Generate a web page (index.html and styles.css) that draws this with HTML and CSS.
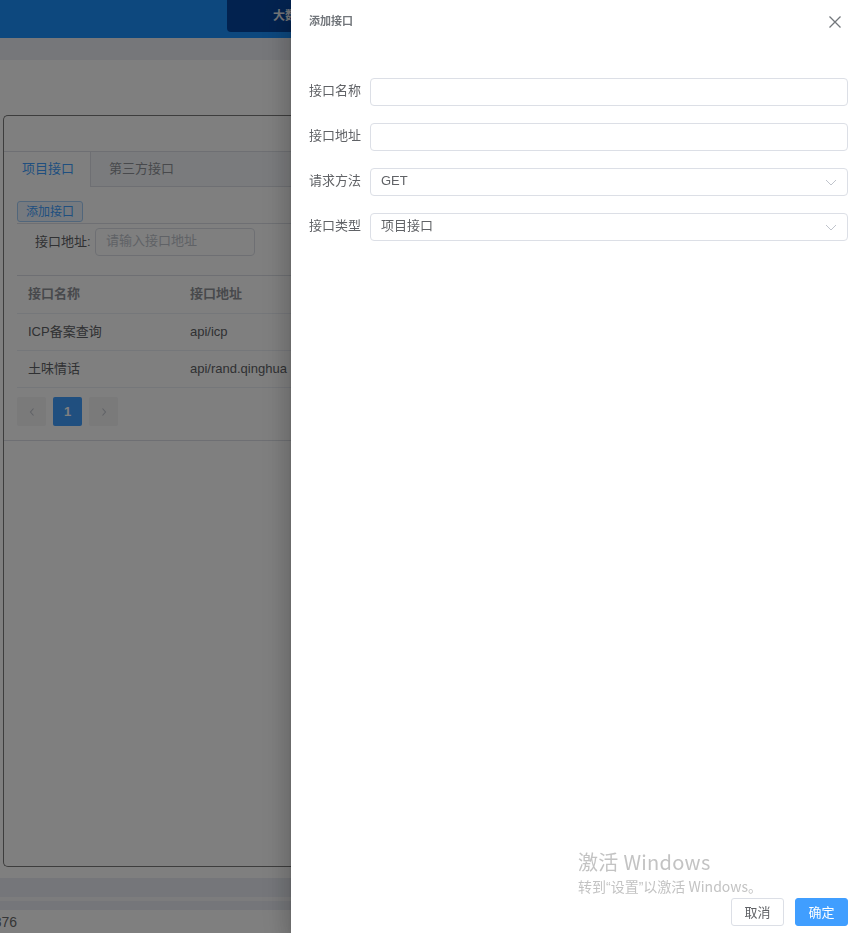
FILE: index.html
```html
<!DOCTYPE html>
<html lang="zh-CN">
<head>
<meta charset="utf-8">
<title>添加接口</title>
<link rel="stylesheet" href="styles.css">
</head>
<body>
<div class="app">
  <header class="topbar">
    <div class="nav-item"><span class="nav-text">大数据平台</span></div>
  </header>
  <div class="tagsbar"></div>
  <main class="content">
    <div class="card">
      <div class="card-head"></div>
      <div class="tabs">
        <div class="tabs-nav">
          <div class="tab active">项目接口</div>
          <div class="tab">第三方接口</div>
        </div>
        <div class="tabs-body">
          <button class="btn-add">添加接口</button>
          <div class="search">
            <span class="search-label">接口地址:</span>
            <div class="search-input">请输入接口地址</div>
          </div>
          <table class="table">
            <thead>
              <tr><th class="c1">接口名称</th><th>接口地址</th></tr>
            </thead>
            <tbody>
              <tr><td class="c1">ICP备案查询</td><td>api/icp</td></tr>
              <tr><td class="c1">土味情话</td><td>api/rand.qinghua</td></tr>
            </tbody>
          </table>
          <div class="pager">
            <span class="pg-btn"><svg width="8" height="10" viewBox="0 0 8 10"><path d="M5.5 1.5 2.5 5l3 3.5" fill="none" stroke="#c0c4cc" stroke-width="1.1"/></svg></span>
            <span class="pg-btn current">1</span>
            <span class="pg-btn"><svg width="8" height="10" viewBox="0 0 8 10"><path d="M2.5 1.5 5.5 5l-3 3.5" fill="none" stroke="#c0c4cc" stroke-width="1.1"/></svg></span>
          </div>
        </div>
      </div>
    </div>
  </main>
  <div class="band band-a"></div>
  <div class="band band-gap"></div>
  <div class="band band-b"></div>
  <footer class="foot">2876</footer>
</div>

<div class="overlay"></div>

<aside class="drawer">
  <div class="drawer-head">
    <span class="drawer-title">添加接口</span>
    <svg class="close" width="14" height="14" viewBox="0 0 14 14"><path d="M1.5 1.5l11 11M12.5 1.5l-11 11" stroke="#72767b" stroke-width="1.3" fill="none"/></svg>
  </div>
  <div class="drawer-body">
    <div class="form-item">
      <label class="form-label">接口名称</label>
      <div class="field"></div>
    </div>
    <div class="form-item">
      <label class="form-label">接口地址</label>
      <div class="field"></div>
    </div>
    <div class="form-item">
      <label class="form-label">请求方法</label>
      <div class="field select"><span>GET</span><svg class="chev" width="12" height="7" viewBox="0 0 12 7"><path d="M1 1l5 5 5-5" fill="none" stroke="#c0c4cc" stroke-width="1"/></svg></div>
    </div>
    <div class="form-item">
      <label class="form-label">接口类型</label>
      <div class="field select"><span>项目接口</span><svg class="chev" width="12" height="7" viewBox="0 0 12 7"><path d="M1 1l5 5 5-5" fill="none" stroke="#c0c4cc" stroke-width="1"/></svg></div>
    </div>
  </div>
  <div class="drawer-foot">
    <button class="btn btn-cancel">取消</button>
    <button class="btn btn-ok">确定</button>
  </div>
</aside>

<div class="watermark">
  <div class="wm1">激活 Windows</div>
  <div class="wm2">转到<span class="q">“</span>设置<span class="q">”</span>以激活 Windows。</div>
</div>
</body>
</html>
```

FILE: styles.css
```css
* { box-sizing: border-box; }
html, body { margin: 0; padding: 0; }
body {
  width: 867px;
  height: 933px;
  overflow: hidden;
  font-family: "Liberation Sans", "Noto Sans CJK SC", sans-serif;
  color: #606266;
  background: #ffffff;
}

.app { width: 867px; }

.topbar {
  height: 38px;
  background: #1a90fd;
  display: flex;
  padding-left: 227px;
}
.nav-item {
  width: 64px;
  height: 32px;
  background: #05459f;
  border-bottom-left-radius: 4px;
  color: #e6eaf0;
  font-weight: bold;
  font-size: 12px;
  display: flex;
  align-items: center;
  padding-left: 46px;
  overflow: hidden;
  white-space: nowrap;
}
.nav-text { line-height: 1; }

.tagsbar { height: 22px; background: #eceef4; }

.content { padding: 55px 0 0 3px; height: 818px; }

.card {
  height: 752px;
  border: 1px solid #7a7a7a;
  border-radius: 5px;
  border-right: none;
  border-top-right-radius: 0;
  border-bottom-right-radius: 0;
  overflow: hidden;
}
.card-head { height: 35px; }

.tabs {
  border-top: 1px solid #dcdfe6;
  border-bottom: 1px solid #dcdfe6;
}
.tabs-nav {
  display: flex;
  height: 35px;
  background: #f5f7fa;
  border-bottom: 1px solid #dcdfe6;
  font-size: 13px;
}
.tab {
  padding: 0 16px 0 18px;
  line-height: 33px;
  color: #909399;
}
.tab.active {
  background: #ffffff;
  color: #409eff;
  border-right: 1px solid #dcdfe6;
  height: 35px;
}

.tabs-body { padding: 14px 0 14px 13px; }

.btn-add {
  display: block;
  height: 21px;
  padding: 0 8px;
  font-family: inherit;
  font-size: 12px;
  line-height: 18px;
  color: #409eff;
  background: #ecf5ff;
  border: 1px solid #a3cdf7;
  border-radius: 3px;
}

.search {
  margin-top: 1px;
  border-top: 1px solid #dcdfe6;
  padding: 2px 0 0 18px;
  display: flex;
  align-items: center;
  height: 32px;
  box-sizing: content-box;
}
.search-label { font-size: 13px; color: #606266; width: 60px; line-height: 1; padding-bottom: 2px; }
.search-input {
  width: 160px;
  height: 28px;
  border: 1px solid #dcdfe6;
  border-radius: 4px;
  font-size: 13px;
  color: #c0c4cc;
  padding-left: 10px;
  line-height: 24px;
}

.table {
  margin-top: 17px;
  width: 100%;
  border-collapse: collapse;
  border-top: 1px solid #dcdfe6;
  font-size: 13px;
  line-height: 1;
}
.table th, .table td {
  text-align: left;
  padding: 0 11px 2px;
  border-bottom: 1px solid #ebeef5;
}
.table th { height: 38px; color: #909399; font-weight: bold; }
.table td { height: 37px; color: #606266; }
.table .c1 { width: 162px; }

.pager {
  display: flex;
  gap: 7px;
  margin-top: 9px;
}
.pg-btn {
  width: 29px;
  height: 29px;
  background: #f4f4f5;
  border-radius: 2px;
  display: flex;
  align-items: center;
  justify-content: center;
  font-size: 13px;
  font-weight: bold;
  color: #606266;
}
.pg-btn.current { background: #409eff; color: #ffffff; }

.band { height: 19px; background: #eaedf4; }
.band-gap { height: 4px; background: #f8f9fb; }
.band-b { height: 9px; }
.foot {
  font-size: 14px;
  color: #6c6c6c;
  margin-left: -14px;
  padding-top: 4px;
}

.overlay {
  position: fixed;
  inset: 0;
  background: rgba(0, 0, 0, 0.5);
}

.drawer {
  position: fixed;
  top: 0;
  right: 0;
  width: 576px;
  height: 933px;
  background: #ffffff;
  display: flex;
  flex-direction: column;
  box-shadow: 0 8px 10px -5px rgba(0,0,0,.2), 0 16px 24px 2px rgba(0,0,0,.14), 0 6px 30px 5px rgba(0,0,0,.12);
}
.drawer-head {
  display: flex;
  align-items: center;
  justify-content: space-between;
  padding: 7px 25px 0 18px;
  height: 28px;
  box-sizing: content-box;
}
.drawer-title {
  font-size: 11px;
  font-weight: bold;
  color: #72767b;
  line-height: 1;
}
.close { display: block; position: relative; top: 1px; }

.drawer-body {
  flex: 1;
  padding: 43px 19px 0 18px;
}
.form-item {
  display: flex;
  align-items: center;
  margin-bottom: 17px;
}
.form-label {
  width: 61px;
  font-size: 13px;
  color: #606266;
  line-height: 1;
  padding-bottom: 3px;
}
.field {
  flex: 1;
  height: 28px;
  border: 1px solid #dcdfe6;
  border-radius: 4px;
}
.select {
  display: flex;
  align-items: center;
  justify-content: space-between;
  padding: 0 10px 0 10px;
  font-size: 13px;
  color: #606266;
}
.select span { line-height: 1; padding-bottom: 3px; }
.chev { display: block; }

.drawer-foot {
  display: flex;
  justify-content: flex-end;
  gap: 11px;
  padding: 0 19px 7px 0;
}
.btn {
  width: 53px;
  height: 28px;
  border-radius: 3px;
  font-family: inherit;
  font-size: 13px;
  padding: 0 0 2px;
}
.btn-cancel { background: #ffffff; border: 1px solid #dcdfe6; color: #606266; }
.btn-ok { background: #409eff; border: 1px solid #409eff; color: #ffffff; }

.watermark {
  position: fixed;
  left: 578px;
  top: 849px;
  color: #c3c3c3;
  font-family: "Noto Sans CJK SC", "Liberation Sans", sans-serif;
  pointer-events: none;
}
.wm1 { font-size: 20px; line-height: 26px; letter-spacing: 0.3px; }
.wm2 { font-size: 14px; line-height: 20px; margin-top: 1px; }
.q { font-family: "Liberation Sans", sans-serif; }
```
